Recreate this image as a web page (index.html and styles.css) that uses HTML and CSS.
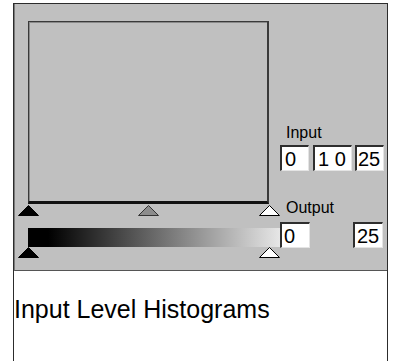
FILE: index.html
```html
<!DOCTYPE html>
<html>
<head>
<meta charset="utf-8">
<link rel="stylesheet" href="styles.css">
</head>
<body>
<div class="card">
  <div class="panel">
    <div class="left">
      <div class="hist"></div>
      <div class="track track-top">
        <svg class="thumb thumb-start" viewBox="0 0 21 11"><polygon points="10.5,0.5 20.5,10.5 0.5,10.5" fill="#000" stroke="#000"/></svg>
        <svg class="thumb thumb-mid" viewBox="0 0 21 11"><polygon points="10.5,0.5 20.5,10.5 0.5,10.5" fill="#8c8c8c" stroke="#333"/></svg>
        <svg class="thumb thumb-end" viewBox="0 0 21 11"><polygon points="10.5,0.5 20.5,10.5 0.5,10.5" fill="#fff" stroke="#000"/></svg>
      </div>
      <div class="grad"></div>
      <div class="track track-bottom">
        <svg class="thumb thumb-start" viewBox="0 0 21 11"><polygon points="10.5,0.5 20.5,10.5 0.5,10.5" fill="#000" stroke="#000"/></svg>
        <svg class="thumb thumb-end" viewBox="0 0 21 11"><polygon points="10.5,0.5 20.5,10.5 0.5,10.5" fill="#fff" stroke="#000"/></svg>
      </div>
    </div>
    <div class="right">
      <div class="label label-input">Input</div>
      <div class="row row-input">
        <span class="field f1">0</span>
        <span class="field f2">1 0</span>
        <span class="field f3">25</span>
      </div>
      <div class="label label-output">Output</div>
      <div class="row row-output">
        <span class="field f4">0</span>
        <span class="field f5">25</span>
      </div>
    </div>
  </div>
  <div class="caption">Input Level Histograms</div>
</div>
</body>
</html>
```
FILE: styles.css
```css
html, body {
  margin: 0;
  padding: 0;
  background: #fff;
  overflow: hidden;
}

.card {
  margin: 3px 0 0 13px;
  width: 375px;
  box-sizing: border-box;
  border: 1px solid #2c2c2c;
  border-bottom: 0;
  font-family: "Liberation Sans", Arial, sans-serif;
}

.panel {
  box-sizing: border-box;
  height: 267px;
  background: #c0c0c0;
  border-left: 1px solid #7a7a7a;
  border-bottom: 1px solid #555;
  padding: 17px 0 0 13px;
  display: grid;
  grid-template-columns: 252px 1fr;
}

.left {
  display: flex;
  flex-direction: column;
}

.hist {
  box-sizing: border-box;
  width: 241px;
  height: 183px;
  background: #c0c0c0;
  border-top: 1px solid #3a3a3a;
  border-left: 1px solid #3a3a3a;
  border-right: 2px solid #3a3a3a;
  border-bottom: 3px solid #111;
  box-shadow: inset 1px 1px 0 #8a8a8a;
}

.track {
  position: relative;
}

.track-top {
  height: 24px;
}

.track-bottom {
  height: 12px;
}

.thumb {
  position: absolute;
  width: 21px;
  height: 11px;
  display: block;
}

.track-top .thumb {
  top: 1px;
}

.track-bottom .thumb {
  top: 0;
}

.thumb-start {
  left: -10px;
}

.thumb-mid {
  left: 110px;
}

.thumb-end {
  left: 231px;
}

.grad {
  height: 19px;
  background: linear-gradient(to right, #000 0, #000 8%, #e6e6e6 100%);
}

.right {
  display: flex;
  flex-direction: column;
}

.label {
  font-size: 16px;
  line-height: 16px;
  color: #000;
  margin-left: 6px;
}

.label-input {
  margin-top: 104px;
}

.label-output {
  margin-top: 29px;
}

.row {
  display: flex;
}

.row-input {
  margin-top: 4px;
}

.row-output {
  margin-top: 6px;
  width: 103px;
  justify-content: space-between;
}

.field {
  box-sizing: border-box;
  height: 26px;
  background: #fff;
  border-top: 2px solid #2e2e2e;
  border-left: 2px solid #2e2e2e;
  border-right: 1px solid #e4e4e4;
  border-bottom: 1px solid #e4e4e4;
  font-size: 20px;
  line-height: 22px;
  padding: 1px 0 0 3px;
  overflow: hidden;
  white-space: nowrap;
  color: #000;
}

.f1 {
  width: 29px;
}

.f2 {
  width: 39px;
  margin-left: 4px;
}

.f3 {
  width: 29px;
  margin-left: 3px;
  padding-left: 1px;
}

.f4 {
  width: 30px;
  padding-left: 2px;
}

.f5 {
  width: 30px;
  padding-left: 2px;
}

.caption {
  height: 90px;
  background: #fff;
  padding-top: 24px;
  box-sizing: border-box;
  font-size: 25px;
  line-height: 29px;
  color: #000;
}
```
